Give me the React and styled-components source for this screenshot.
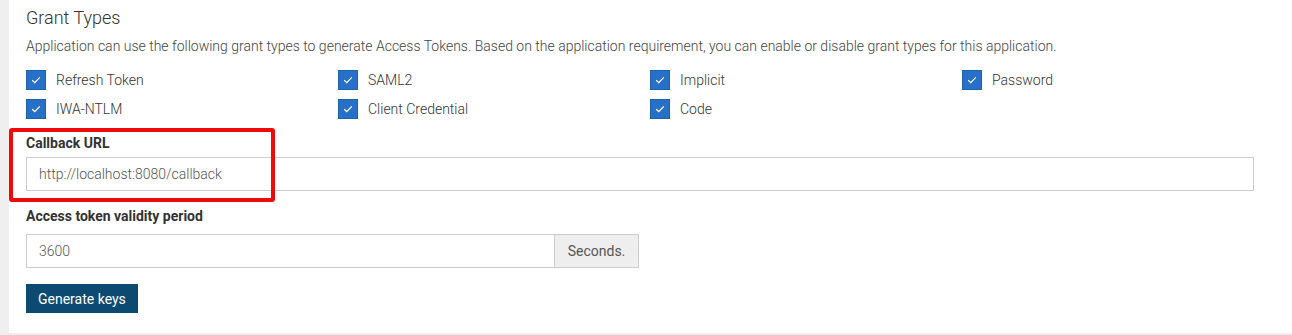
import React from "react";
import styled, { createGlobalStyle } from "styled-components";

const GlobalStyle = createGlobalStyle`
  html, body {
    margin: 0;
    padding: 0;
    background: #efefef;
    font-family: Roboto, "Liberation Sans", Arial, sans-serif;
  }
  * { box-sizing: border-box; }
`;

const Page = styled.div`
  padding-left: 9px;
  width: 1292px;
  height: 335px;
`;

const Panel = styled.div`
  background: #fff;
  padding: 7px 0 20px 17px;
`;

const Title = styled.h3`
  margin: 0;
  font-size: 18px;
  line-height: 22px;
  font-weight: 300;
  color: #333;
`;

const Description = styled.p`
  margin: 7px 0 0;
  font-size: 14px;
  line-height: 20px;
  font-weight: 300;
  color: #444;
`;

const GrantGrid = styled.div`
  margin-top: 14px;
  display: grid;
  grid-template-columns: repeat(4, 312px);
  row-gap: 9px;
`;

const GrantItem = styled.label`
  display: flex;
  align-items: center;
  gap: 10px;
  height: 20px;
  font-size: 14px;
  font-weight: 300;
  color: #333;
`;

const Box = styled.span`
  width: 20px;
  height: 20px;
  background: #2770c8;
  border: 1px solid #2160ad;
  display: flex;
  align-items: center;
  justify-content: center;
`;

const FieldGroup = styled.div`
  position: relative;
  margin-top: ${(p) => p.$top}px;
`;

const FieldLabel = styled.div`
  font-size: 14px;
  line-height: 18px;
  font-weight: 700;
  color: #333;
  margin-bottom: ${(p) => p.$gap}px;
`;

const TextInput = styled.div`
  width: ${(p) => p.$width}px;
  height: 34px;
  border: 1px solid #ccc;
  padding: 0 12px;
  display: flex;
  align-items: center;
  font-size: 14px;
  font-weight: 300;
  color: #555;
  background: #fff;
`;

const InputGroup = styled.div`
  display: flex;
`;

const Addon = styled.div`
  width: 84px;
  height: 34px;
  border: 1px solid #ccc;
  border-left: none;
  background: #eee;
  display: flex;
  align-items: center;
  justify-content: center;
  font-size: 14px;
  color: #555;
`;

const Highlight = styled.div`
  position: absolute;
  left: -17px;
  top: -6px;
  width: 266px;
  height: 74px;
  border: 4px solid #ee0a0a;
  border-radius: 3px;
  pointer-events: none;
`;

const Button = styled.button`
  margin-top: 16px;
  height: 29px;
  padding: 0 12px;
  background: #0c4a72;
  border: none;
  color: #fff;
  font-family: inherit;
  font-size: 14px;
  display: block;
`;

const grants = [
  "Refresh Token",
  "SAML2",
  "Implicit",
  "Password",
  "IWA-NTLM",
  "Client Credential",
  "Code",
];

function Check() {
  return (
    <svg width="10" height="8" viewBox="0 0 10 8" fill="none">
      <path d="M1.2 4.2 L3.8 6.6 L8.8 1.4" stroke="#fff" strokeWidth="1.3" />
    </svg>
  );
}

export default function App() {
  return (
    <>
      <GlobalStyle />
      <Page>
        <Panel>
          <Title>Grant Types</Title>
          <Description>
            Application can use the following grant types to generate Access
            Tokens. Based on the application requirement, you can enable or
            disable grant types for this application.
          </Description>
          <GrantGrid>
            {grants.map((g) => (
              <GrantItem key={g}>
                <Box>
                  <Check />
                </Box>
                {g}
              </GrantItem>
            ))}
          </GrantGrid>

          <FieldGroup $top={15}>
            <FieldLabel $gap={5}>Callback URL</FieldLabel>
            <TextInput $width={1228}>http://localhost:8080/callback</TextInput>
            <Highlight />
          </FieldGroup>

          <FieldGroup $top={16}>
            <FieldLabel $gap={9}>Access token validity period</FieldLabel>
            <InputGroup>
              <TextInput $width={529}>3600</TextInput>
              <Addon>Seconds.</Addon>
            </InputGroup>
          </FieldGroup>

          <Button>Generate keys</Button>
        </Panel>
      </Page>
    </>
  );
}
